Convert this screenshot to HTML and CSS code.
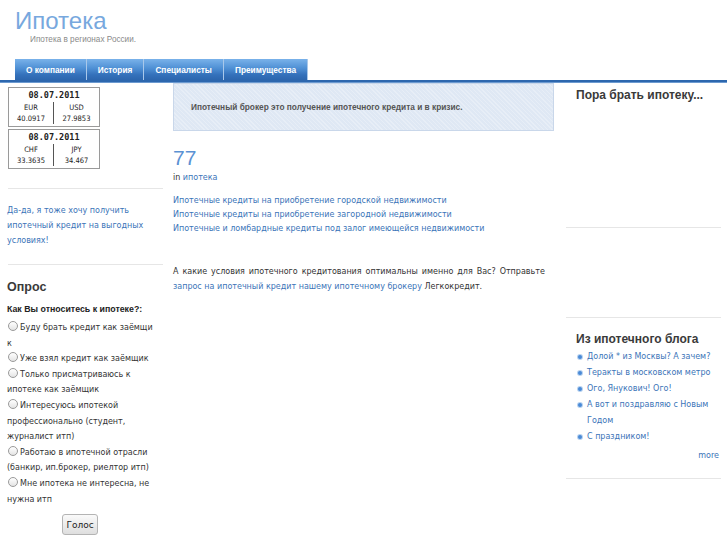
FILE: index.html
```html
<!DOCTYPE html>
<html lang="ru">
<head>
<meta charset="utf-8">
<title>Ипотека</title>
<link rel="stylesheet" href="styles.css">
</head>
<body>
<header class="masthead">
  <h1 class="site-title">Ипотека</h1>
  <div class="tagline">Ипотека в регионах России.</div>
  <nav class="nav">
    <a class="nav-item" href="#">О компании</a>
    <a class="nav-item" href="#">История</a>
    <a class="nav-item" href="#">Специалисты</a>
    <a class="nav-item" href="#">Преимущества</a>
  </nav>
</header>
<div class="rule"></div>
<div class="cols">
  <aside class="left">
    <div class="rate">
      <div class="rate-date">08.07.2011</div>
      <div class="rate-grid">
        <div class="rate-cell"><div class="rate-code">EUR</div><div class="rate-val">40.0917</div></div>
        <div class="rate-cell"><div class="rate-code">USD</div><div class="rate-val">27.9853</div></div>
      </div>
    </div>
    <div class="rate">
      <div class="rate-date">08.07.2011</div>
      <div class="rate-grid">
        <div class="rate-cell"><div class="rate-code">CHF</div><div class="rate-val">33.3635</div></div>
        <div class="rate-cell"><div class="rate-code">JPY</div><div class="rate-val">34.467</div></div>
      </div>
    </div>
    <hr class="sep sep-first">
    <p class="promo"><a href="#">Да-да, я тоже хочу получить<br>ипотечный кредит на выгодных<br>условиях!</a></p>
    <hr class="sep">
    <h3 class="box-title poll-title">Опрос</h3>
    <div class="poll-q">Как Вы относитесь к ипотеке?:</div>
    <ul class="poll">
      <li><span class="radio"></span>Буду брать кредит как заёмщи<br>к</li>
      <li><span class="radio"></span>Уже взял кредит как заёмщик</li>
      <li><span class="radio"></span>Только присматриваюсь к<br>ипотеке как заёмщик</li>
      <li><span class="radio"></span>Интересуюсь ипотекой<br>профессионально (студент,<br>журналист итп)</li>
      <li><span class="radio"></span>Работаю в ипотечной отрасли<br>(банкир, ип.брокер, риелтор итп)</li>
      <li><span class="radio"></span>Мне ипотека не интересна, не<br>нужна итп</li>
    </ul>
    <button class="vote" type="button">Голос</button>
  </aside>
  <main class="center">
    <div class="notice">Ипотечный брокер это получение ипотечного кредита и в кризис.</div>
    <h2 class="post-title">77</h2>
    <div class="post-meta">in <a href="#">ипотека</a></div>
    <ul class="post-links">
      <li><a href="#">Ипотечные кредиты на приобретение городской недвижимости</a></li>
      <li><a href="#">Ипотечные кредиты на приобретение загородной недвижимости</a></li>
      <li><a href="#">Ипотечные и ломбардные кредиты под залог имеющейся недвижимости</a></li>
    </ul>
    <p class="post-text"><span class="lead">А какие условия ипотечного кредитования оптимальны именно для Вас? Отправьте</span><br><a href="#">запрос на ипотечный кредит нашему ипотечному брокеру</a> Легкокредит.</p>
  </main>
  <aside class="right">
    <h3 class="box-title right-title">Пора брать ипотеку...</h3>
    <hr class="sep sep-r1">
    <hr class="sep sep-r2">
    <h3 class="box-title blog-title">Из ипотечного блога</h3>
    <ul class="blog">
      <li><a href="#">Долой * из Москвы? А зачем?</a></li>
      <li><a href="#">Теракты в московском метро</a></li>
      <li><a href="#">Ого, Янукович! Ого!</a></li>
      <li><a href="#">А вот и поздравляю с Новым<br>Годом</a></li>
      <li><a href="#">С праздником!</a></li>
    </ul>
    <div class="more"><a href="#">more</a></div>
    <hr class="sep sep-r3">
  </aside>
</div>
</body>
</html>
```
FILE: styles.css
```css
html, body {
  margin: 0;
  padding: 0;
  background: #fff;
}
body {
  font-family: "DejaVu Sans", sans-serif;
  font-size: 8px;
  color: #333;
  width: 727px;
  overflow: hidden;
}
a {
  color: #3b74b8;
  text-decoration: none;
}
ul {
  list-style: none;
  margin: 0;
  padding: 0;
}
p {
  margin: 0;
}

/* header */
.masthead {
  padding-left: 15px;
}
.site-title {
  margin: 0;
  padding-top: 7px;
  font-family: "Liberation Sans", Arial, sans-serif;
  font-weight: normal;
  font-size: 24px;
  line-height: 28px;
  color: #77a8de;
}
.tagline {
  margin: -1px 0 0 15px;
  font-family: "Liberation Sans", Arial, sans-serif;
  font-size: 8.2px;
  line-height: 12px;
  color: #8a8a8a;
}
.nav {
  display: flex;
  margin-top: 13px;
  height: 21px;
}
.nav-item {
  display: flex;
  align-items: center;
  padding: 0 11px;
  font-family: "Liberation Sans", Arial, sans-serif;
  font-weight: bold;
  font-size: 8.3px;
  color: #fff;
  background: linear-gradient(#79b2ea 0%, #4e8fd4 45%, #3471bb 75%, #2c66ae 100%);
  border-right: 1px solid #a9c8ea;
}
.rule {
  height: 2px;
  background: #2d67ae;
  border-bottom: 1px solid #6c9ad0;
}

/* columns */
.cols {
  display: flex;
  align-items: flex-start;
}
.left {
  width: 158px;
  padding: 4px 0 0 7px;
  flex: none;
}
.center {
  width: 381px;
  margin-left: 8px;
  flex: none;
}
.right {
  width: 155px;
  margin-left: 12px;
  flex: none;
}

/* rates */
.rate {
  width: 90px;
  height: 38px;
  margin: 0 0 2px 1px;
  border: 1px solid #9a9a9a;
  font-family: "DejaVu Sans Mono", monospace;
  color: #222;
  text-align: center;
}
.rate-date {
  padding-top: 1px;
  font-weight: bold;
  font-size: 8.5px;
  line-height: 13px;
}
.rate-grid {
  display: flex;
}
.rate-cell {
  width: 45px;
  font-family: "DejaVu Sans Condensed", "DejaVu Sans", sans-serif;
  font-size: 7.5px;
  line-height: 11px;
}
.rate-cell:first-child {
  border-right: 1px solid #555;
  width: 44px;
}

.sep {
  border: 0;
  height: 1px;
  background: #e6e6e6;
  margin: 0;
}
.left .sep {
  width: 155px;
  margin-left: 1px;
}
.left .sep-first {
  margin-top: 19px;
}
.promo {
  margin: 14px 0 16px;
  line-height: 15px;
}
.box-title {
  margin: 0;
  font-family: "Liberation Sans", Arial, sans-serif;
  font-weight: bold;
  font-size: 12px;
  line-height: 16px;
  color: #3a3a3a;
}
.poll-title {
  margin-top: 14px;
  font-size: 12.5px;
}
.poll-q {
  margin-top: 6px;
  font-family: "Liberation Sans", Arial, sans-serif;
  font-weight: bold;
  font-size: 8.8px;
  line-height: 16px;
  color: #222;
}
.poll {
  margin-top: 3px;
  line-height: 15.6px;
}
.radio {
  display: inline-block;
  width: 8px;
  height: 8px;
  margin: 0 2px 0 1px;
  border: 1px solid #9a9a9a;
  border-radius: 50%;
  background: linear-gradient(#fff, #e4e4e4);
  vertical-align: -1px;
}
.vote {
  display: block;
  margin: 7px 0 0 55px;
  width: 36px;
  height: 21px;
  padding: 0;
  border: 1px solid #b4b4b4;
  border-radius: 3px;
  background: linear-gradient(#fafafa, #dedede);
  font-family: "DejaVu Sans", sans-serif;
  font-size: 9px;
  color: #222;
}

/* center */
.notice {
  height: 46px;
  padding-left: 17px;
  border: 1px solid #c9d7ea;
  background-color: #dfe8f4;
  background-image: repeating-linear-gradient(45deg, rgba(255,255,255,0.25) 0 1px, rgba(255,255,255,0) 1px 3px);
  display: flex;
  align-items: center;
  font-family: "Liberation Sans", Arial, sans-serif;
  font-weight: bold;
  font-size: 8.3px;
  color: #555;
}
.post-title {
  margin: 14px 0 0;
  font-family: "Liberation Sans", Arial, sans-serif;
  font-weight: normal;
  font-size: 21px;
  line-height: 26px;
  color: #5b91d3;
}
.post-meta {
  line-height: 14px;
}
.post-links {
  margin-top: 9px;
  line-height: 14px;
}
.post-text {
  margin-top: 28px;
  line-height: 15px;
  white-space: nowrap;
}
.post-text .lead {
  word-spacing: 1.4px;
}

/* right */
.right-title {
  padding: 4px 0 0 10px;
}
.right .sep {
  width: 155px;
}
.right .sep-r1 {
  margin-top: 124px;
}
.right .sep-r2 {
  margin-top: 89px;
}
.blog-title {
  margin-top: 13px;
  padding-left: 10px;
}
.blog {
  margin-top: 2px;
  padding-left: 21px;
  line-height: 16px;
}
.blog li {
  position: relative;
}
.blog li::before {
  content: "";
  position: absolute;
  left: -9px;
  top: 6px;
  width: 4px;
  height: 4px;
  border-radius: 50%;
  background: #4a8ad6;
  box-shadow: 0 0 0 1px #b7d2f0;
}
.more {
  text-align: right;
  padding-right: 2px;
  margin-top: 3px;
  line-height: 16px;
}
.right .sep-r3 {
  margin-top: 14px;
}
```
